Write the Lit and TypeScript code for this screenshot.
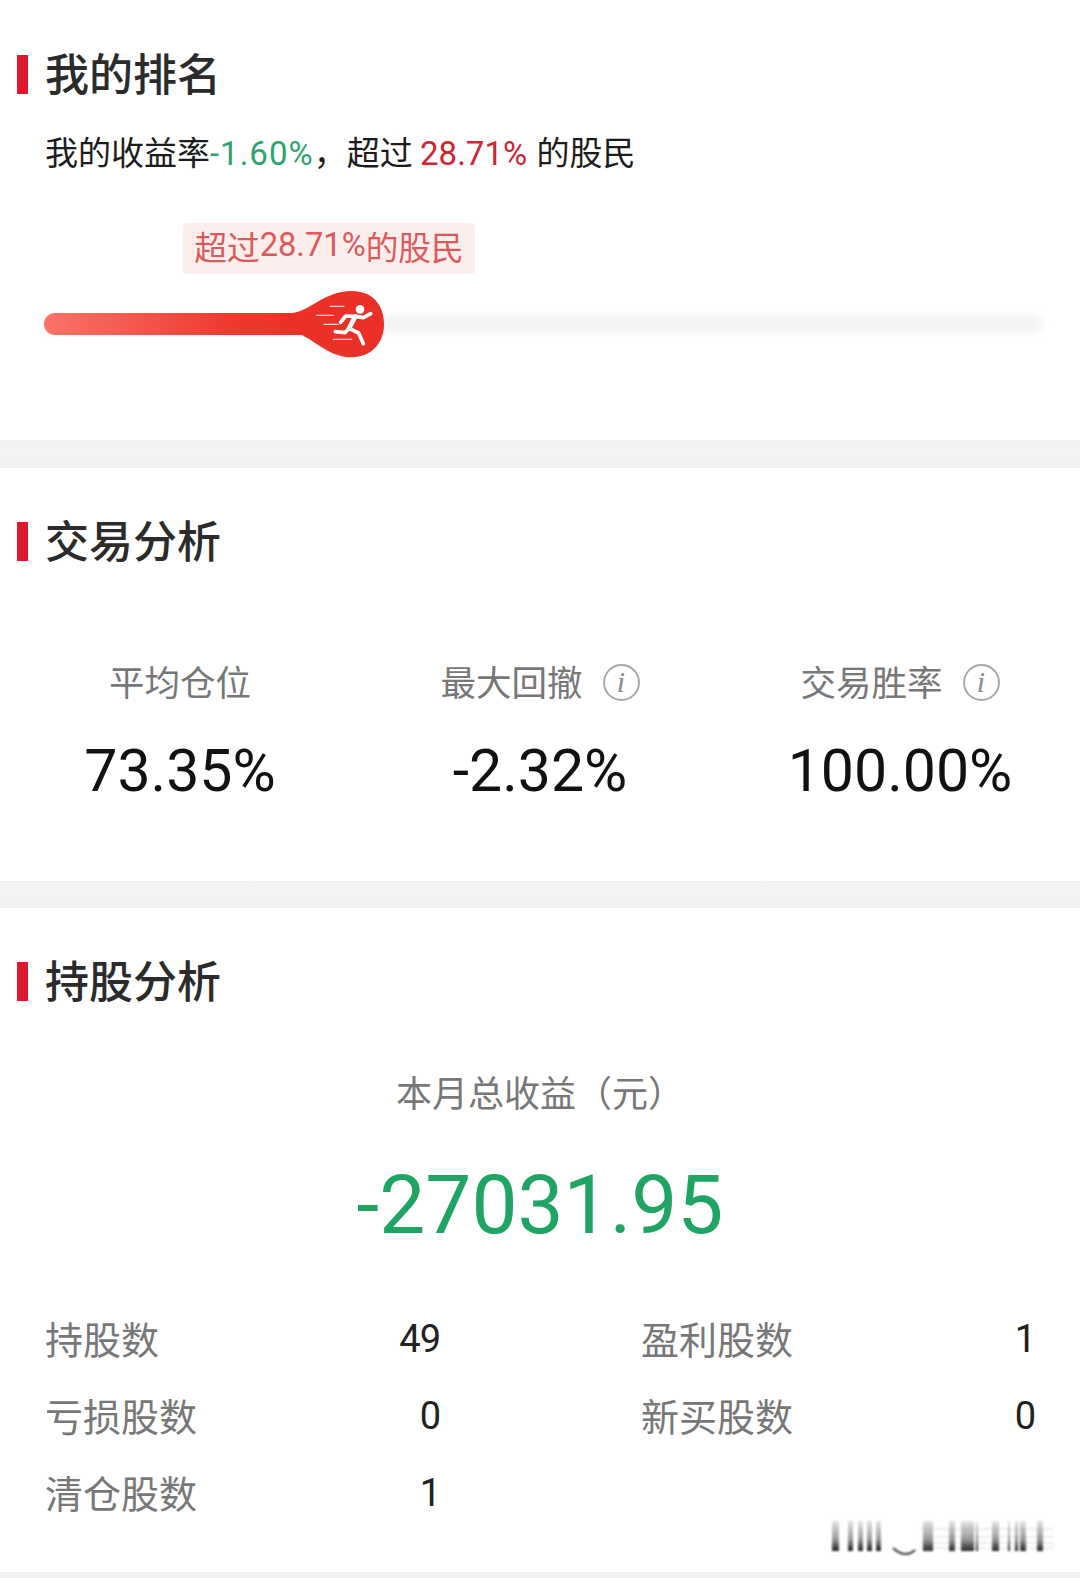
import { LitElement, css, html, svg } from "lit";
import { customElement } from "lit/decorators.js";

const stats = [
  { label: "平均仓位", value: "73.35%", info: false },
  { label: "最大回撤", value: "-2.32%", info: true },
  { label: "交易胜率", value: "100.00%", info: true },
];

const holdings = [
  { label: "持股数", value: "49" },
  { label: "盈利股数", value: "1" },
  { label: "亏损股数", value: "0" },
  { label: "新买股数", value: "0" },
  { label: "清仓股数", value: "1" },
];

// smeared watermark bottom right: [x, width]
const smear = [
  [52, 7], [68, 5], [78, 5], [87, 5], [96, 5], [143, 10], [169, 6], [181, 13],
  [196, 2], [212, 7], [228, 2], [235, 3], [240, 6], [257, 6],
];

@customElement("app-root")
export class AppRoot extends LitElement {
  static styles = css`
    :host {
      display: block;
      width: 1080px;
      height: 1578px;
      overflow: hidden;
      position: relative;
      background: #fff;
      color: #222;
      font-family: "Noto Sans CJK SC", "Noto Sans", sans-serif;
    }
    .band {
      height: 28px;
      background: linear-gradient(#f1f1f1, #f4f4f4 50%, #f0f0f0);
    }
    .band.mid {
      height: 27px;
    }
    .band.last {
      height: 6px;
    }
    .section {
      padding-top: 54px;
    }
    .section.first {
      padding-top: 55px;
      padding-bottom: 105px;
    }
    .section.trade {
      padding-bottom: 75px;
    }
    .section.hold {
      padding-bottom: 42px;
    }
    .title {
      display: flex;
      align-items: center;
      height: 39px;
      gap: 17px;
      padding-left: 17px;
      font-size: 44px;
      font-weight: 500;
      color: #2b2b2b;
    }
    .title::before {
      content: "";
      width: 11px;
      height: 39px;
      background: #e0182f;
    }
    .title span {
      padding-bottom: 5px;
    }
    .summary {
      margin: 37px 0 0 45px;
      height: 40px;
      font-size: 33px;
      line-height: 40px;
      color: #1c1c1c;
      white-space: pre;
    }
    .num {
      font-family: "Roboto", sans-serif;
      font-weight: 400;
    }
    .green {
      color: #2aa56c;
      letter-spacing: 1px;
    }
    .red {
      color: #d2232f;
      margin-right: 2px;
    }
    .pill {
      display: flex;
      align-items: center;
      justify-content: center;
      box-sizing: border-box;
      width: 292px;
      height: 51px;
      margin: 52px 0 0 183px;
      padding-bottom: 7px;
      border-radius: 4px;
      background: #fdeeee;
      color: #dc5a5c;
      font-size: 32.7px;
      white-space: nowrap;
    }
    .track {
      position: relative;
      height: 22px;
      margin: 39px 37px 0 44px;
    }
    .track::before {
      content: "";
      position: absolute;
      inset: 2px 0;
      border-radius: 9px;
      background: #f4f4f4;
      filter: blur(3px);
    }
    .fill {
      position: relative;
      height: 100%;
      width: 262px;
      border-radius: 11px 0 0 11px;
      background: linear-gradient(90deg, #f9736b, #ef3a30 70%, #ea3027);
    }
    .knob {
      position: absolute;
      left: 236px;
      top: -32px;
      width: 120px;
      height: 80px;
    }
    .stats {
      display: grid;
      grid-template-columns: repeat(3, 1fr);
      margin-top: 99px;
    }
    .stat {
      display: flex;
      flex-direction: column;
      align-items: center;
    }
    .stat-label {
      display: flex;
      align-items: center;
      gap: 20px;
      height: 40px;
      font-size: 35.5px;
      color: #777;
    }
    .info {
      display: flex;
      align-items: center;
      justify-content: center;
      box-sizing: border-box;
      width: 37px;
      height: 37px;
      margin-top: 4px;
      border: 2px solid #a8a8a8;
      border-radius: 50%;
      font: italic 30px "Liberation Serif", serif;
      color: #8a8a8a;
    }
    .stat-value {
      margin-top: 36px;
      font-size: 59px;
      line-height: 70px;
      color: #111;
    }
    .month {
      margin-top: 70px;
      text-align: center;
      font-size: 36px;
      line-height: 40px;
      color: #777;
    }
    .total {
      margin-top: 44px;
      text-align: center;
      font-size: 82px;
      line-height: 100px;
      color: #1fa463;
    }
    .rows {
      display: grid;
      grid-template-columns: 395px 394px;
      column-gap: 201px;
      margin: 44px 0 0 45px;
    }
    .row {
      display: flex;
      align-items: center;
      justify-content: space-between;
      height: 77px;
      font-size: 38px;
      color: #777;
    }
    .row .num {
      padding-top: 3px;
      font-size: 38px;
      letter-spacing: -1px;
      color: #222;
    }
    .smear {
      position: absolute;
      left: 780px;
      top: 1515px;
      width: 300px;
      height: 45px;
      filter: blur(0.8px);
    }
  `;

  private knob() {
    return html`<svg class="knob" viewBox="0 0 360 240">
      <path
        fill="#ea3027"
        d="M0 97H28C85 97 130 30 215 30C278 30 312 72 312 130C312 188 272 229 215 229C135 229 85 152 28 152H0Z"
      />
      <g fill="none" stroke="#fff" stroke-linecap="round" stroke-linejoin="round">
        <g stroke-width="3.5" opacity="0.8">
          <path d="M150 76H192M110 103H160M132 130H175M160 175H215" />
        </g>
        <g stroke-width="11">
          <path d="M226 106L207 142" stroke-width="14" />
          <path d="M226 106L250 110L272 98" />
          <path d="M222 106L197 105L182 124" />
          <path d="M207 142L236 156L250 188" />
          <path d="M207 142L195 155L166 152" />
        </g>
      </g>
      <circle cx="240" cy="85" r="13" fill="#fff" />
    </svg>`;
  }

  private smearMark() {
    return html`<svg class="smear" viewBox="0 0 300 45">
      <defs>
        <linearGradient id="fade" x1="0" y1="0" x2="0" y2="1">
          <stop offset="0" stop-color="#222" stop-opacity="0.12" />
          <stop offset="0.6" stop-color="#222" stop-opacity="0.45" />
          <stop offset="1" stop-color="#111" stop-opacity="0.95" />
        </linearGradient>
      </defs>
      ${smear.map(
        ([x, w]) => svg`<rect x=${x} y="6" width=${w} height="30" fill="url(#fade)" />`
      )}
      <path d="M113 33Q125 44 135 35" fill="none" stroke="#333" stroke-width="2" />
      <path d="M140 14H274M140 22H274M140 28H274M140 33H274" stroke="#999" stroke-opacity="0.35" />
    </svg>`;
  }

  render() {
    return html`
      <section class="section first">
        <div class="title"><span>我的排名</span></div>
        <div class="summary">我的收益率<span class="num green">-1.60%</span>，超过 <span class="num red">28.71%</span> 的股民</div>
        <div class="pill">超过<span class="num">28.71%</span>的股民</div>
        <div class="track">
          <div class="fill"></div>
          ${this.knob()}
        </div>
      </section>
      <div class="band"></div>
      <section class="section trade">
        <div class="title"><span>交易分析</span></div>
        <div class="stats">
          ${stats.map(
            (s) => html`<div class="stat">
              <div class="stat-label">
                ${s.label}${s.info ? html`<span class="info">i</span>` : ""}
              </div>
              <div class="stat-value num">${s.value}</div>
            </div>`
          )}
        </div>
      </section>
      <div class="band mid"></div>
      <section class="section hold">
        <div class="title"><span>持股分析</span></div>
        <div class="month">本月总收益（元）</div>
        <div class="total num">-27031.95</div>
        <div class="rows">
          ${holdings.map(
            (h) => html`<div class="row">
              <span>${h.label}</span><span class="num">${h.value}</span>
            </div>`
          )}
        </div>
      </section>
      <div class="band last"></div>
      ${this.smearMark()}
    `;
  }
}
